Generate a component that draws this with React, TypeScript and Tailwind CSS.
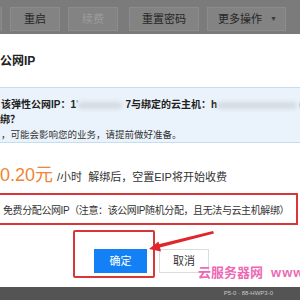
const FONT = "font-['Liberation_Sans','Noto_Sans_CJK_SC',sans-serif]";

function TopButton({ label, muted, caret, className }: { label: string; muted?: boolean; caret?: boolean; className: string }) {
  return (
    <div
      className={`h-[24px] flex items-center border border-[#8c8c8c] bg-[#838383] text-[11px] ${muted ? "text-[#9c9c9c]" : "text-[#262626]"} ${className}`}
    >
      <span className="flex-1 text-center leading-none">{label}</span>
      {caret && <span className="text-[7px] text-[#3a3a3a] mr-[8px]">▼</span>}
    </div>
  );
}

function Blur({ w }: { w: string }) {
  return <span className={`inline-block align-middle h-[7px] ${w} bg-[#d3dae2] blur-[2px] rounded-full`} />;
}

export default function App() {
  return (
    <div className={`relative w-[300px] h-[300px] overflow-hidden flex flex-col bg-white ${FONT}`}>
      {/* dimmed toolbar behind the dialog */}
      <div className="h-[34px] shrink-0 bg-[#7b7b7b] flex items-start pt-[7px]">
        <div className="w-[2px] h-[24px] border-r border-[#8c8c8c] bg-[#838383]" />
        <TopButton label="重启" className="ml-[8px] w-[50px]" />
        <TopButton label="续费" muted className="ml-[8px] w-[50px]" />
        <TopButton label="重置密码" className="ml-[11px] w-[70px]" />
        <TopButton label="更多操作" caret className="ml-[8px] w-[79px] pl-[2px]" />
      </div>

      {/* dialog */}
      <div className="h-[253px] shrink-0 bg-white flex flex-col text-[#333]">
        <div className="pt-[19px] text-[12px] font-bold leading-[16px] text-[#222]">公网IP</div>

        <div className="mt-[18px] -mx-[4px] h-[56px] border border-[#c6dcef] bg-[#eaf3fb] pt-[9px] pl-[4px] text-[10px] leading-[15px]">
          <div className="font-bold whitespace-nowrap text-[#222]">
            该弹性公网IP：1<span className="text-[#9aa]">'</span>
            <Blur w="w-[44px]" />
            <span className="ml-[3px]">7与绑定的云主机：h</span>
            <Blur w="w-[80px]" />
            <span className="ml-[2px] text-[#aab]">(ws.ee</span>
          </div>
          <div className="font-bold -ml-[11px] text-[#222]">解绑？</div>
          <div className="text-[9.5px] text-[#333]">，可能会影响您的业务，请提前做好准备。</div>
        </div>

        <div className="mt-[21px] flex items-baseline whitespace-nowrap">
          <span className="text-[18px] leading-[22px] text-[#ef8536]">0.20元</span>
          <span className="ml-[4px] text-[11px] text-[#333]">/小时&nbsp;&nbsp;解绑后，空置EIP将开始收费</span>
        </div>

        <div className="mt-[7px] -ml-[4px] mr-[2px] h-[32px] border-2 border-[#d9363a] pl-[5px] pt-[9px] text-[10px] tracking-[-0.4px] leading-[13px] whitespace-nowrap text-[#333]">
          免费分配公网IP（注意：该公网IP随机分配，且无法与云主机解绑）
        </div>

        <div className="mt-[24px] pl-[94px] flex gap-[12px]">
          <button className="w-[53px] h-[24px] bg-[#1380f5] text-white text-[11px]">确定</button>
          <button className="w-[50px] h-[24px] border border-[#dcdcdc] bg-white text-[#333] text-[11px]">取消</button>
        </div>
      </div>

      {/* dimmed page below */}
      <div className="flex-1 bg-[#545454] flex justify-end pr-[27px] pt-[2px]">
        <span className="text-[6px] text-[#c8c8c8] leading-[8px]">P5-0 · 88-HWP3-0</span>
      </div>

      {/* annotation: highlight box and arrow */}
      <div className="absolute left-[73px] top-[230px] w-[82px] h-[48px] border-2 border-[#d9363a] rounded-[2px]" />
      <svg className="absolute left-[145px] top-[228px]" width="72" height="28" viewBox="0 0 72 28">
        <polygon points="68,3 69,5.5 13,20 12.5,16.5" fill="#e0262b" />
        <polygon points="4,21 16,23.5 13.5,13.5" fill="#e0262b" />
      </svg>

      {/* watermark */}
      <div className="absolute left-[198px] top-[265px] whitespace-nowrap text-[13px] font-bold leading-[16px] text-[#ec6ab6]">
        云服务器网<span className="ml-[8px] tracking-[1px]">www.yfwq.com</span>
      </div>
    </div>
  );
}
